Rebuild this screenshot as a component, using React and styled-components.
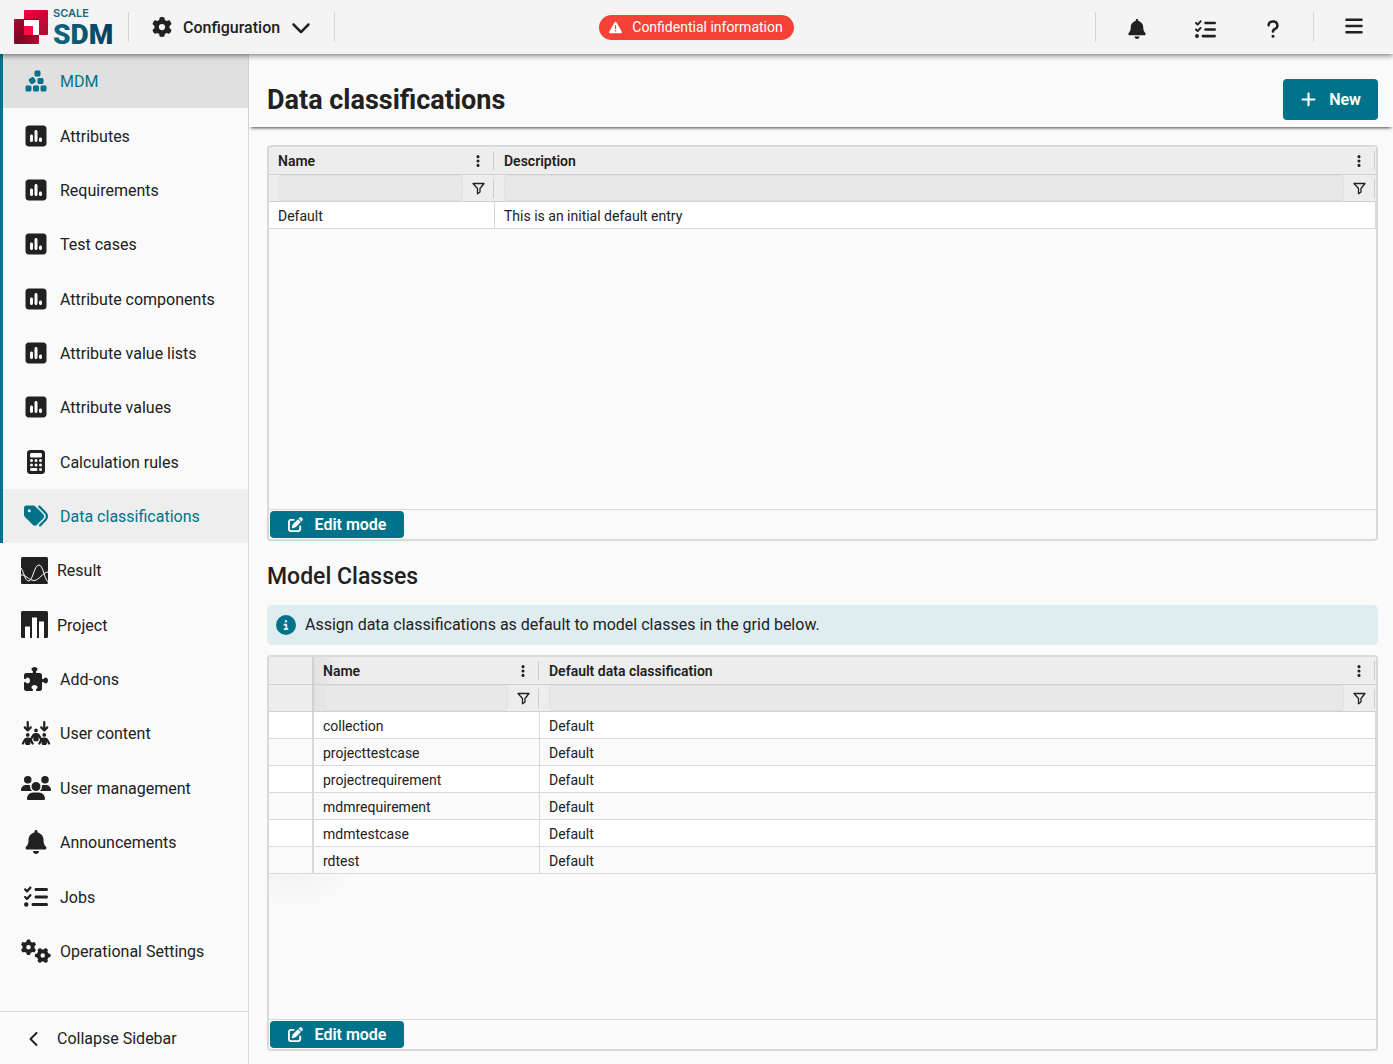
import React from "react";
import styled, { createGlobalStyle, css } from "styled-components";
import {
  FaArrowsDownToPeople,
  FaBars,
  FaBell,
  FaCalculator,
  FaChevronDown,
  FaChevronLeft,
  FaCircleInfo,
  FaCubesStacked,
  FaEllipsisVertical,
  FaGear,
  FaGears,
  FaListCheck,
  FaPenToSquare,
  FaPlus,
  FaPuzzlePiece,
  FaQuestion,
  FaSquarePollVertical,
  FaTags,
  FaTriangleExclamation,
  FaUsers,
} from "react-icons/fa6";

const color = {
  teal: "#00738a",
  text: "#212121",
  page: "#fafafa",
  line: "#d9d9d9",
  head: "#ededed",
};

const GlobalStyle = createGlobalStyle`
  *, *::before, *::after { box-sizing: border-box; }
  body {
    margin: 0;
    background: ${color.page};
    color: ${color.text};
    font: 400 16px/20px Roboto, "Liberation Sans", sans-serif;
  }
  button, input { font: inherit; color: inherit; }
  svg { display: block; flex: none; }
`;

const Page = styled.div`
  display: flex;
  flex-direction: column;
  min-height: 100vh;
`;

/* ---------- top bar ---------- */

const TopBar = styled.header`
  position: relative;
  z-index: 2;
  display: grid;
  grid-template-columns: 1fr auto 1fr;
  align-items: center;
  height: 54px;
  background: #f4f4f4;
  box-shadow: 0 1px 6px rgba(0, 0, 0, 0.6);
`;

const BarSide = styled.div`
  display: flex;
  align-items: center;
  justify-content: ${(p) => (p.$end ? "flex-end" : "flex-start")};
`;

const Divider = styled.span`
  width: 1px;
  height: 30px;
  background: #d4d4d4;
`;

const LogoLink = styled.a`
  display: block;
  padding: 0 14px;
`;

const MenuButton = styled.button`
  display: flex;
  align-items: center;
  gap: 11px;
  width: 205px;
  padding: 0 0 0 23px;
  border: 0;
  background: none;
  font-weight: 500;
`;

const IconButton = styled.button`
  display: flex;
  align-items: center;
  justify-content: center;
  width: ${(p) => p.$width}px;
  height: 54px;
  padding: ${(p) => (p.$raised ? "0 0 2px" : "4px 0 0")};
  border: 0;
  background: none;
`;

const Badge = styled.div`
  display: flex;
  align-items: center;
  gap: 10px;
  height: 25px;
  padding: 0 11px 0 10px;
  border-radius: 13px;
  background: #f44336;
  color: #fff;
  font-size: 14px;
`;

const Icon = styled.span`
  display: flex;
  svg {
    width: auto;
    height: ${(p) => p.$size}px;
  }
`;

const Label = styled.span`
  padding-top: 2px;
`;

/* ---------- sidebar ---------- */

const Columns = styled.div`
  display: flex;
  flex: 1;
`;

const Sidebar = styled.aside`
  display: flex;
  flex: none;
  flex-direction: column;
  width: 249px;
  border-right: 1px solid ${color.line};
`;

const NavList = styled.ul`
  display: flex;
  flex: 1;
  flex-direction: column;
  margin: 0;
  padding: 0 0 33px;
  list-style: none;
`;

const NavItem = styled.li`
  display: flex;
  flex: 1;
  min-height: 44px;
`;

const NavLink = styled.a`
  display: flex;
  flex: 1;
  align-items: center;
  gap: 9px;
  padding-left: 18px;
  border-left: 3px solid ${(p) => (p.$grouped ? color.teal : "transparent")};
  color: ${(p) => (p.$tone ? color.teal : color.text)};
  text-decoration: none;
  ${(p) => p.$tone && css`background: ${p.$tone === "parent" ? "#e0e0e0" : "#eeeeee"};`}
`;

const NavIcon = styled.span`
  display: flex;
  svg {
    width: ${(p) => p.$width}px;
    height: ${(p) => p.$height}px;
  }
`;

const CollapseButton = styled.button`
  display: flex;
  align-items: center;
  gap: 9px;
  height: 53px;
  padding: 2px 0 0 21px;
  border: 0;
  border-top: 1px solid ${color.line};
  background: none;
`;

/* ---------- content ---------- */

const Main = styled.main`
  display: flex;
  flex: 1;
  flex-direction: column;
  min-width: 0;
`;

const TitleBar = styled.div`
  display: flex;
  align-items: center;
  justify-content: space-between;
  height: 73px;
  padding: 18px 15px 0 18px;
  box-shadow: 0 3px 3px -2px rgba(0, 0, 0, 0.7);
`;

const Title = styled.h1`
  margin: 0;
  font-size: 27px;
  font-weight: 700;
  line-height: 32px;
`;

const SolidButton = styled.button`
  display: flex;
  align-items: center;
  justify-content: center;
  gap: 12px;
  width: ${(p) => p.$width}px;
  height: ${(p) => p.$height}px;
  padding: 0;
  border: 0;
  border-radius: 4px;
  background: ${color.teal};
  color: #fff;
  font-weight: 600;
`;

const Content = styled.div`
  display: flex;
  flex: 1;
  flex-direction: column;
  padding: 18px 15px 13px 18px;
`;

const SectionTitle = styled.h2`
  margin: 0;
  padding-top: 8px;
  font-size: 23px;
  font-weight: 500;
  line-height: 56px;
`;

const InfoBar = styled.p`
  display: flex;
  align-items: center;
  gap: 9px;
  min-height: 40px;
  margin: 0 0 10px;
  padding: 0 9px;
  border-radius: 5px;
  background: #dfedf1;
`;

/* ---------- grid ---------- */

const GridPanel = styled.section`
  display: flex;
  flex: 1;
  flex-direction: column;
  min-height: 280px;
  border: 2px solid ${color.line};
  border-radius: 4px;
`;

const GridBody = styled.div`
  flex: 1;
`;

const Table = styled.table`
  width: 100%;
  table-layout: fixed;
  border-collapse: separate;
  border-spacing: 0;
  font-size: 14px;
`;

const Col = styled.col`
  width: ${(p) => (p.$width ? `${p.$width}px` : "auto")};
`;

const HeadCell = styled.th`
  height: ${(p) => (p.$filter ? 27 : 28)}px;
  padding: 0;
  border-bottom: 1px solid #d0d0d0;
  background: ${(p) =>
    p.$shaded ? `linear-gradient(90deg, #e3e3e3, ${color.head} 28px)` : color.head};
  text-align: left;
  font-weight: 600;
`;

const PinnedHead = styled(HeadCell)`
  border-right: 2px solid #d0d0d0;
`;

const HeadInner = styled.div`
  display: flex;
  align-items: center;
  height: 26px;
  padding: 0 1px 0 9px;
`;

const HeadLabel = styled.span`
  flex: 1;
`;

const CellButton = styled.button`
  display: flex;
  align-items: center;
  justify-content: center;
  width: 30px;
  height: 26px;
  padding: 0;
  border: 0;
  background: none;
`;

const ColumnEdge = styled.span`
  width: 1px;
  height: 19px;
  background: #cccccc;
`;

const FilterInput = styled.input`
  flex: 1;
  min-width: 0;
  height: 26px;
  padding: 0 6px;
  border: 1px solid #e0e0e0;
  border-radius: 4px;
  background: #e8e8e8;
`;

const Row = styled.tr`
  background: ${color.page};
  &:nth-child(odd) {
    background: #fff;
  }
`;

const Cell = styled.td`
  height: 27px;
  padding: 2px 9px 0;
  border-right: 1px solid ${color.line};
  border-bottom: 1px solid ${color.line};
  line-height: 20px;
`;

const PinnedCell = styled(Cell)`
  border-right-width: 2px;
`;

const PinnedShade = styled.div`
  width: 88px;
  height: 38px;
  background: radial-gradient(ellipse 60px 36px at 25px 0, #f3f3f3, ${color.page});
`;

const GridFooter = styled.footer`
  padding: 1px;
  border-top: 1px solid ${color.line};
`;

/* ---------- drawings ---------- */

function Logo() {
  return (
    <svg width="100" height="48" viewBox="0 -6 100 48" role="img" aria-label="Scale SDM">
      <defs>
        <linearGradient id="back" x1="0" y1="0" x2="1" y2="1">
          <stop offset="0" stopColor="#f0003c" />
          <stop offset="1" stopColor="#a80f34" />
        </linearGradient>
        <linearGradient id="front" x1="0" y1="0" x2="1" y2="1">
          <stop offset="0" stopColor="#b3062d" />
          <stop offset="0.5" stopColor="#7d0623" />
          <stop offset="1" stopColor="#c0062f" />
        </linearGradient>
        <linearGradient id="word" x1="0" y1="0" x2="1" y2="0">
          <stop offset="0" stopColor="#0e6a82" />
          <stop offset="1" stopColor="#053f5c" />
        </linearGradient>
      </defs>
      <rect x="10" y="1" width="24" height="25" rx="1" fill="url(#back)" />
      <rect x="0" y="10" width="25" height="25" rx="1" fill="url(#front)" />
      <path d="M10 11h15v15h-6v-9h-9z" fill="#fff" />
      <rect x="10" y="17" width="9" height="9" fill="#ff0a46" />
      <text x="39" y="8" fill="#1d657d" fontFamily="Inter, sans-serif" fontSize="11" fontWeight="600">
        SCALE
      </text>
      <text x="39" y="35" fill="url(#word)" fontFamily="Roboto, sans-serif" fontSize="28" fontWeight="900">
        SDM
      </text>
    </svg>
  );
}

function ResultIcon() {
  return (
    <svg viewBox="0 0 27 27" fill="none" stroke="#fff">
      <rect width="27" height="27" rx="1.5" fill={color.text} stroke="none" />
      <path d="M0 11C3 15 4 24 7.500 24C12 24 13 8 18 8C22 8 23 21 27 25" />
      <path d="M0 18C4 17 8 23.500 13 23.500C18 23.500 22 15 27 15" />
    </svg>
  );
}

function ProjectIcon() {
  return (
    <svg viewBox="0 0 27 27">
      <rect width="27" height="27" rx="1.5" fill={color.text} />
      <path d="M4 27V15.500h5V27zM11 27V6.500h5V27zM18 27V10.500h5V27z" fill="#fff" />
    </svg>
  );
}

function FilterIcon() {
  return (
    <svg width="13" height="13" viewBox="0 0 13 13" fill="none" stroke={color.text} strokeWidth="1.3">
      <path d="M1 1.500h11L8 6.500v3.500L5.500 11.800V6.500z" strokeLinejoin="round" />
    </svg>
  );
}

/* ---------- data ---------- */

const navItems = [
  { label: "MDM", icon: FaCubesStacked, grouped: true, tone: "parent" },
  { label: "Attributes", icon: FaSquarePollVertical, grouped: true },
  { label: "Requirements", icon: FaSquarePollVertical, grouped: true },
  { label: "Test cases", icon: FaSquarePollVertical, grouped: true },
  { label: "Attribute components", icon: FaSquarePollVertical, grouped: true },
  { label: "Attribute value lists", icon: FaSquarePollVertical, grouped: true },
  { label: "Attribute values", icon: FaSquarePollVertical, grouped: true },
  { label: "Calculation rules", icon: FaCalculator, grouped: true },
  { label: "Data classifications", icon: FaTags, grouped: true, tone: "current" },
  { label: "Result", icon: ResultIcon, boxed: true },
  { label: "Project", icon: ProjectIcon, boxed: true },
  { label: "Add-ons", icon: FaPuzzlePiece },
  { label: "User content", icon: FaArrowsDownToPeople },
  { label: "User management", icon: FaUsers },
  { label: "Announcements", icon: FaBell },
  { label: "Jobs", icon: FaListCheck },
  { label: "Operational Settings", icon: FaGears },
];

const classifications = [["Default", "This is an initial default entry"]];

const modelClasses = [
  "collection",
  "projecttestcase",
  "projectrequirement",
  "mdmrequirement",
  "mdmtestcase",
  "rdtest",
].map((name) => [name, "Default"]);

function DataGrid({ label, columns, rows, pinned }) {
  return (
    <GridPanel aria-label={label}>
      <GridBody>
        <Table>
          <colgroup>
            {pinned && <Col $width={45} />}
            <Col $width={226} />
            <Col />
          </colgroup>
          <thead>
            <tr>
              {pinned && <PinnedHead />}
              {columns.map((name, i) => (
                <HeadCell key={name} scope="col" $shaded={pinned && i === 0}>
                  <HeadInner>
                    <HeadLabel>{name}</HeadLabel>
                    <CellButton type="button" aria-label={`${name} column menu`}>
                      <Icon $size={14}>
                        <FaEllipsisVertical />
                      </Icon>
                    </CellButton>
                    <ColumnEdge />
                  </HeadInner>
                </HeadCell>
              ))}
            </tr>
            <tr>
              {pinned && <PinnedHead $filter />}
              {columns.map((name, i) => (
                <HeadCell key={name} $filter $shaded={pinned && i === 0}>
                  <HeadInner>
                    <FilterInput type="text" aria-label={`Filter ${name}`} />
                    <CellButton type="button" aria-label={`${name} filter options`}>
                      <FilterIcon />
                    </CellButton>
                    <ColumnEdge />
                  </HeadInner>
                </HeadCell>
              ))}
            </tr>
          </thead>
          <tbody>
            {rows.map((row) => (
              <Row key={row[0]}>
                {pinned && <PinnedCell />}
                {row.map((value, i) => (
                  <Cell key={columns[i]}>{value}</Cell>
                ))}
              </Row>
            ))}
          </tbody>
        </Table>
        {pinned && <PinnedShade />}
      </GridBody>
      <GridFooter>
        <SolidButton type="button" $width={134} $height={27}>
          <Icon $size={15}>
            <FaPenToSquare />
          </Icon>
          Edit mode
        </SolidButton>
      </GridFooter>
    </GridPanel>
  );
}

export default function App() {
  return (
    <Page>
      <GlobalStyle />
      <TopBar>
        <BarSide>
          <LogoLink href="#home">
            <Logo />
          </LogoLink>
          <Divider />
          <MenuButton type="button">
            <Icon $size={20}>
              <FaGear />
            </Icon>
            <Label>Configuration</Label>
            <Icon $size={20}>
              <FaChevronDown />
            </Icon>
          </MenuButton>
          <Divider />
        </BarSide>
        <Badge>
          <Icon $size={13}>
            <FaTriangleExclamation />
          </Icon>
          Confidential information
        </Badge>
        <BarSide $end>
          <Divider />
          <IconButton type="button" aria-label="Notifications" $width={81}>
            <Icon $size={20}>
              <FaBell />
            </Icon>
          </IconButton>
          <IconButton type="button" aria-label="Jobs" $width={56}>
            <Icon $size={21}>
              <FaListCheck />
            </Icon>
          </IconButton>
          <IconButton type="button" aria-label="Help" $width={80}>
            <Icon $size={20}>
              <FaQuestion />
            </Icon>
          </IconButton>
          <Divider />
          <IconButton type="button" aria-label="Menu" $width={79} $raised>
            <Icon $size={20}>
              <FaBars />
            </Icon>
          </IconButton>
        </BarSide>
      </TopBar>
      <Columns>
        <Sidebar>
          <NavList>
            {navItems.map(({ label, icon: Glyph, boxed, grouped, tone }) => (
              <NavItem key={label}>
                <NavLink href="#" $grouped={grouped} $tone={tone}>
                  <NavIcon $width={boxed ? 27 : 30} $height={boxed ? 27 : 24}>
                    <Glyph />
                  </NavIcon>
                  <Label>{label}</Label>
                </NavLink>
              </NavItem>
            ))}
          </NavList>
          <CollapseButton type="button">
            <NavIcon $width={27} $height={16}>
              <FaChevronLeft />
            </NavIcon>
            Collapse Sidebar
          </CollapseButton>
        </Sidebar>
        <Main>
          <TitleBar>
            <Title>Data classifications</Title>
            <SolidButton type="button" $width={95} $height={41}>
              <Icon $size={17}>
                <FaPlus />
              </Icon>
              New
            </SolidButton>
          </TitleBar>
          <Content>
            <DataGrid
              label="Data classifications"
              columns={["Name", "Description"]}
              rows={classifications}
            />
            <SectionTitle>Model Classes</SectionTitle>
            <InfoBar>
              <Icon $size={20}>
                <FaCircleInfo color={color.teal} />
              </Icon>
              Assign data classifications as default to model classes in the grid below.
            </InfoBar>
            <DataGrid
              label="Model Classes"
              columns={["Name", "Default data classification"]}
              rows={modelClasses}
              pinned
            />
          </Content>
        </Main>
      </Columns>
    </Page>
  );
}
